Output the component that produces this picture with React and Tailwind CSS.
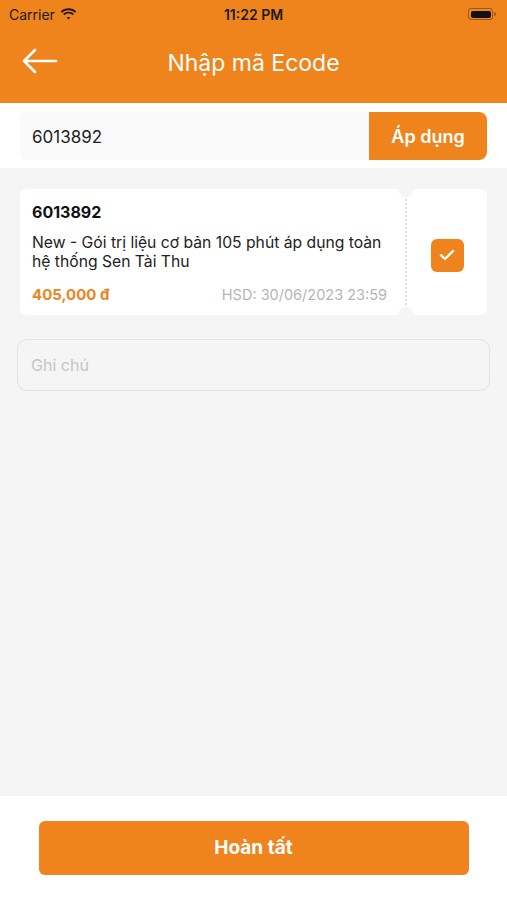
export default function App() {
  return (
    <div
      className="h-[900px] w-full flex flex-col bg-[#f5f5f5] overflow-hidden"
      style={{ fontFamily: 'Inter, "Noto Sans", sans-serif' }}
    >
      {/* header */}
      <div className="bg-[#f0841c] h-[103px] flex flex-col shrink-0">
        <div className="h-[28px] flex items-center justify-between px-[9px] text-[#1a1a1a] relative">
          <div className="flex items-center gap-[5px]">
            <span className="text-[14px]">Carrier</span>
            <svg width="17" height="12" viewBox="0 0 17 12">
              <path d="M8.5 2.2c2.5 0 4.8 1 6.5 2.6l1.3-1.4C14.2 1.5 11.5.3 8.5.3S2.8 1.5.7 3.4L2 4.8c1.7-1.6 4-2.6 6.5-2.6z" fill="#1a1a1a" />
              <path d="M8.5 5.6c1.6 0 3 .6 4.1 1.6l1.3-1.4C12.5 4.5 10.6 3.7 8.5 3.7S4.5 4.5 3.1 5.8l1.3 1.4c1.1-1 2.5-1.6 4.1-1.6z" fill="#1a1a1a" />
              <path d="M8.5 8.9c.7 0 1.3.3 1.8.7L8.5 11.6 6.7 9.6c.5-.4 1.1-.7 1.8-.7z" fill="#1a1a1a" />
            </svg>
          </div>
          <span className="absolute left-1/2 -translate-x-1/2 text-[14px] font-semibold">11:22 PM</span>
          <div className="flex items-center mr-[2px]">
            <div className="w-[25px] h-[12px] rounded-[3px] border border-[#1a1a1a]/40 p-[1.5px]">
              <div className="w-full h-full bg-[#111] rounded-[2px]" />
            </div>
            <div className="w-[2px] h-[4px] bg-[#1a1a1a]/40 rounded-r-sm ml-[1px]" />
          </div>
        </div>
        <div className="flex-1 flex items-center relative pb-[4px]">
          <svg className="absolute left-[21px] top-[20px]" width="37" height="26" viewBox="0 0 37 26" fill="none">
            <path d="M35 13H3M14 2L3 13l11 11" stroke="white" strokeWidth="2.6" strokeLinecap="round" strokeLinejoin="round" />
          </svg>
          <h1 className="w-full text-center text-white text-[23px] font-normal">Nhập mã Ecode</h1>
        </div>
      </div>

      {/* code input */}
      <div className="bg-white pt-[9px] pb-[8px] px-[20px] shrink-0">
        <div className="flex h-[48px]">
          <div className="flex-1 bg-[#fafafa] rounded-l-[6px] flex items-center pl-[12px] pt-[3px] text-[17px] text-[#1e1e1e]">
            6013892
          </div>
          <button className="w-[118px] bg-[#f0841c] rounded-r-[8px] text-white text-[18px] font-semibold">
            Áp dụng
          </button>
        </div>
      </div>

      {/* voucher card */}
      <div className="mx-[20px] mt-[21px] h-[126px] bg-white rounded-[6px] flex relative">
        <div className="flex-1 pl-[12px] pr-[18px] pt-[11px] flex flex-col">
          <div className="text-[16px] font-bold text-[#111]">6013892</div>
          <div className="mt-[9px] text-[15.7px] leading-[19px] text-[#222]">
            New - Gói trị liệu cơ bản 105 phút áp dụng toàn hệ thống Sen Tài Thu
          </div>
          <div className="mt-[13px] flex items-center justify-between">
            <span className="text-[15px] font-bold text-[#f0841c]">405,000 đ</span>
            <span className="text-[14.5px] text-[#b5b5b5]">HSD: 30/06/2023 23:59</span>
          </div>
        </div>
        <div className="w-[82px] border-l-2 border-dotted border-[#dedede] my-[10px] pt-[6px] flex items-center justify-center">
          <div className="w-[33px] h-[33px] bg-[#f0841c] rounded-[6px] flex items-center justify-center">
            <svg width="16" height="12" viewBox="0 0 16 12" fill="none">
              <path d="M2 6.2l4 3.8L14 2" stroke="white" strokeWidth="2.4" strokeLinecap="round" strokeLinejoin="round" />
            </svg>
          </div>
        </div>
        <div className="absolute right-[73px] -top-[8px] w-[16px] h-[16px] rounded-full bg-[#f5f5f5]" />
        <div className="absolute right-[73px] -bottom-[8px] w-[16px] h-[16px] rounded-full bg-[#f5f5f5]" />
      </div>

      {/* note */}
      <div className="mx-[17px] mt-[24px] h-[52px] border border-[#e3e3e3] rounded-[10px] flex items-center pl-[13px] text-[16px] text-[#c6c6c6]">
        Ghi chú
      </div>

      <div className="flex-1" />

      {/* footer */}
      <div className="bg-white h-[104px] shrink-0 flex pt-[25px] justify-center">
        <button className="w-[430px] h-[54px] bg-[#f0841c] rounded-[6px] text-white text-[19px] font-bold">
          Hoàn tất
        </button>
      </div>
    </div>
  );
}
